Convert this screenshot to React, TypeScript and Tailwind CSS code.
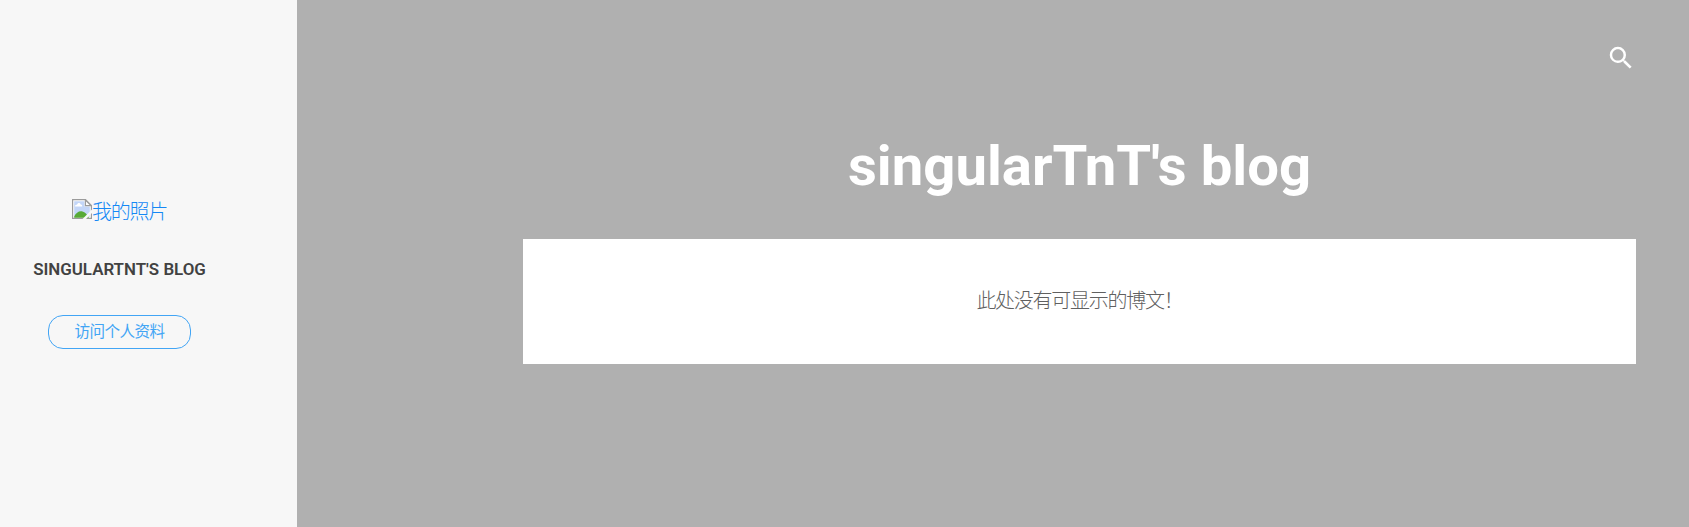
function BrokenImage() {
  return (
    <svg width="20" height="20" viewBox="0 0 20 20" className="shrink-0" aria-hidden="true">
      <path d="M.6.6H13.5L19.4 6.5V19.4H.6Z" fill="#fff" stroke="#9b9b9b" strokeWidth="1.2" />
      <path d="M2.2 2.2H12.4V7.6H17.8V17.8H2.2Z" fill="#c3d6f8" />
      <path d="M3 7.4C3 5.8 4.6 5.6 5 5.8C5.6 3.2 8.4 3.6 8.6 5.4C10 5.2 10.4 6.4 10.2 7.4Z" fill="#fff" />
      <path d="M2.2 18.8V17.5C4 13.5 7.5 11.5 10.5 12.5C13 13.3 15 15 17 18.8Z" fill="#57aa36" />
      <path d="M10.5 20L20 10.5V14L14 20Z" fill="#f7f7f7" />
      <path d="M13.4 1V6.6H19Z" fill="#fff" stroke="#9b9b9b" strokeWidth="1.2" />
    </svg>
  );
}

function Sidebar() {
  return (
    <aside className="w-[297px] shrink-0 bg-[#f7f7f7] pr-[58px]">
      <div className="flex flex-col items-center pt-[199px]">
        <a href="#" className="flex h-[26px] text-[20px] leading-[26px] font-light tracking-[-1.25px] text-[#1588f5]">
          <BrokenImage />
          <span>我的照片</span>
        </a>
        <h2 className="mt-[31px] text-[16.9px] leading-[26px] font-semibold whitespace-nowrap text-[#424242] uppercase">
          singularTnT's blog
        </h2>
        <a
          href="#"
          className="mt-[33px] flex h-[34px] w-[143px] items-center justify-center rounded-[15px] border border-[#42a5f5] pt-[2px] text-[15.6px] font-normal tracking-[-0.6px] text-[#42a5f5]"
        >
          访问个人资料
        </a>
      </div>
    </aside>
  );
}

export default function App() {
  return (
    <div className="flex h-[527px] w-full overflow-hidden bg-[#b0b0b0] font-[Roboto,'Noto_Sans_CJK_SC',sans-serif]">
      <Sidebar />
      <main className="flex-1 pr-[53px] pl-[226px]">
        <div className="flex justify-end pt-[43px]">
          <button aria-label="搜索" className="block text-white">
            <svg width="30" height="30" viewBox="0 0 24 24" fill="currentColor">
              <path d="M15.5 14h-.79l-.28-.27A6.47 6.47 0 0 0 16 9.5 6.5 6.5 0 1 0 9.5 16c1.61 0 3.09-.59 4.23-1.57l.27.28v.79l5 4.99L20.49 19l-4.99-5zm-6 0C7.01 14 5 11.99 5 9.5S7.01 5 9.5 5 14 7.01 14 9.5 11.99 14 9.5 14z" />
            </svg>
          </button>
        </div>
        <h1 className="mt-[61px] text-center text-[56.25px] leading-[64px] font-bold text-white">singularTnT's blog</h1>
        <section className="mt-[41px] flex h-[125px] items-center justify-center bg-white pb-[2px] text-[20px] font-light tracking-[-1.25px] text-[#606060]">
          此处没有可显示的博文！
        </section>
      </main>
    </div>
  );
}
